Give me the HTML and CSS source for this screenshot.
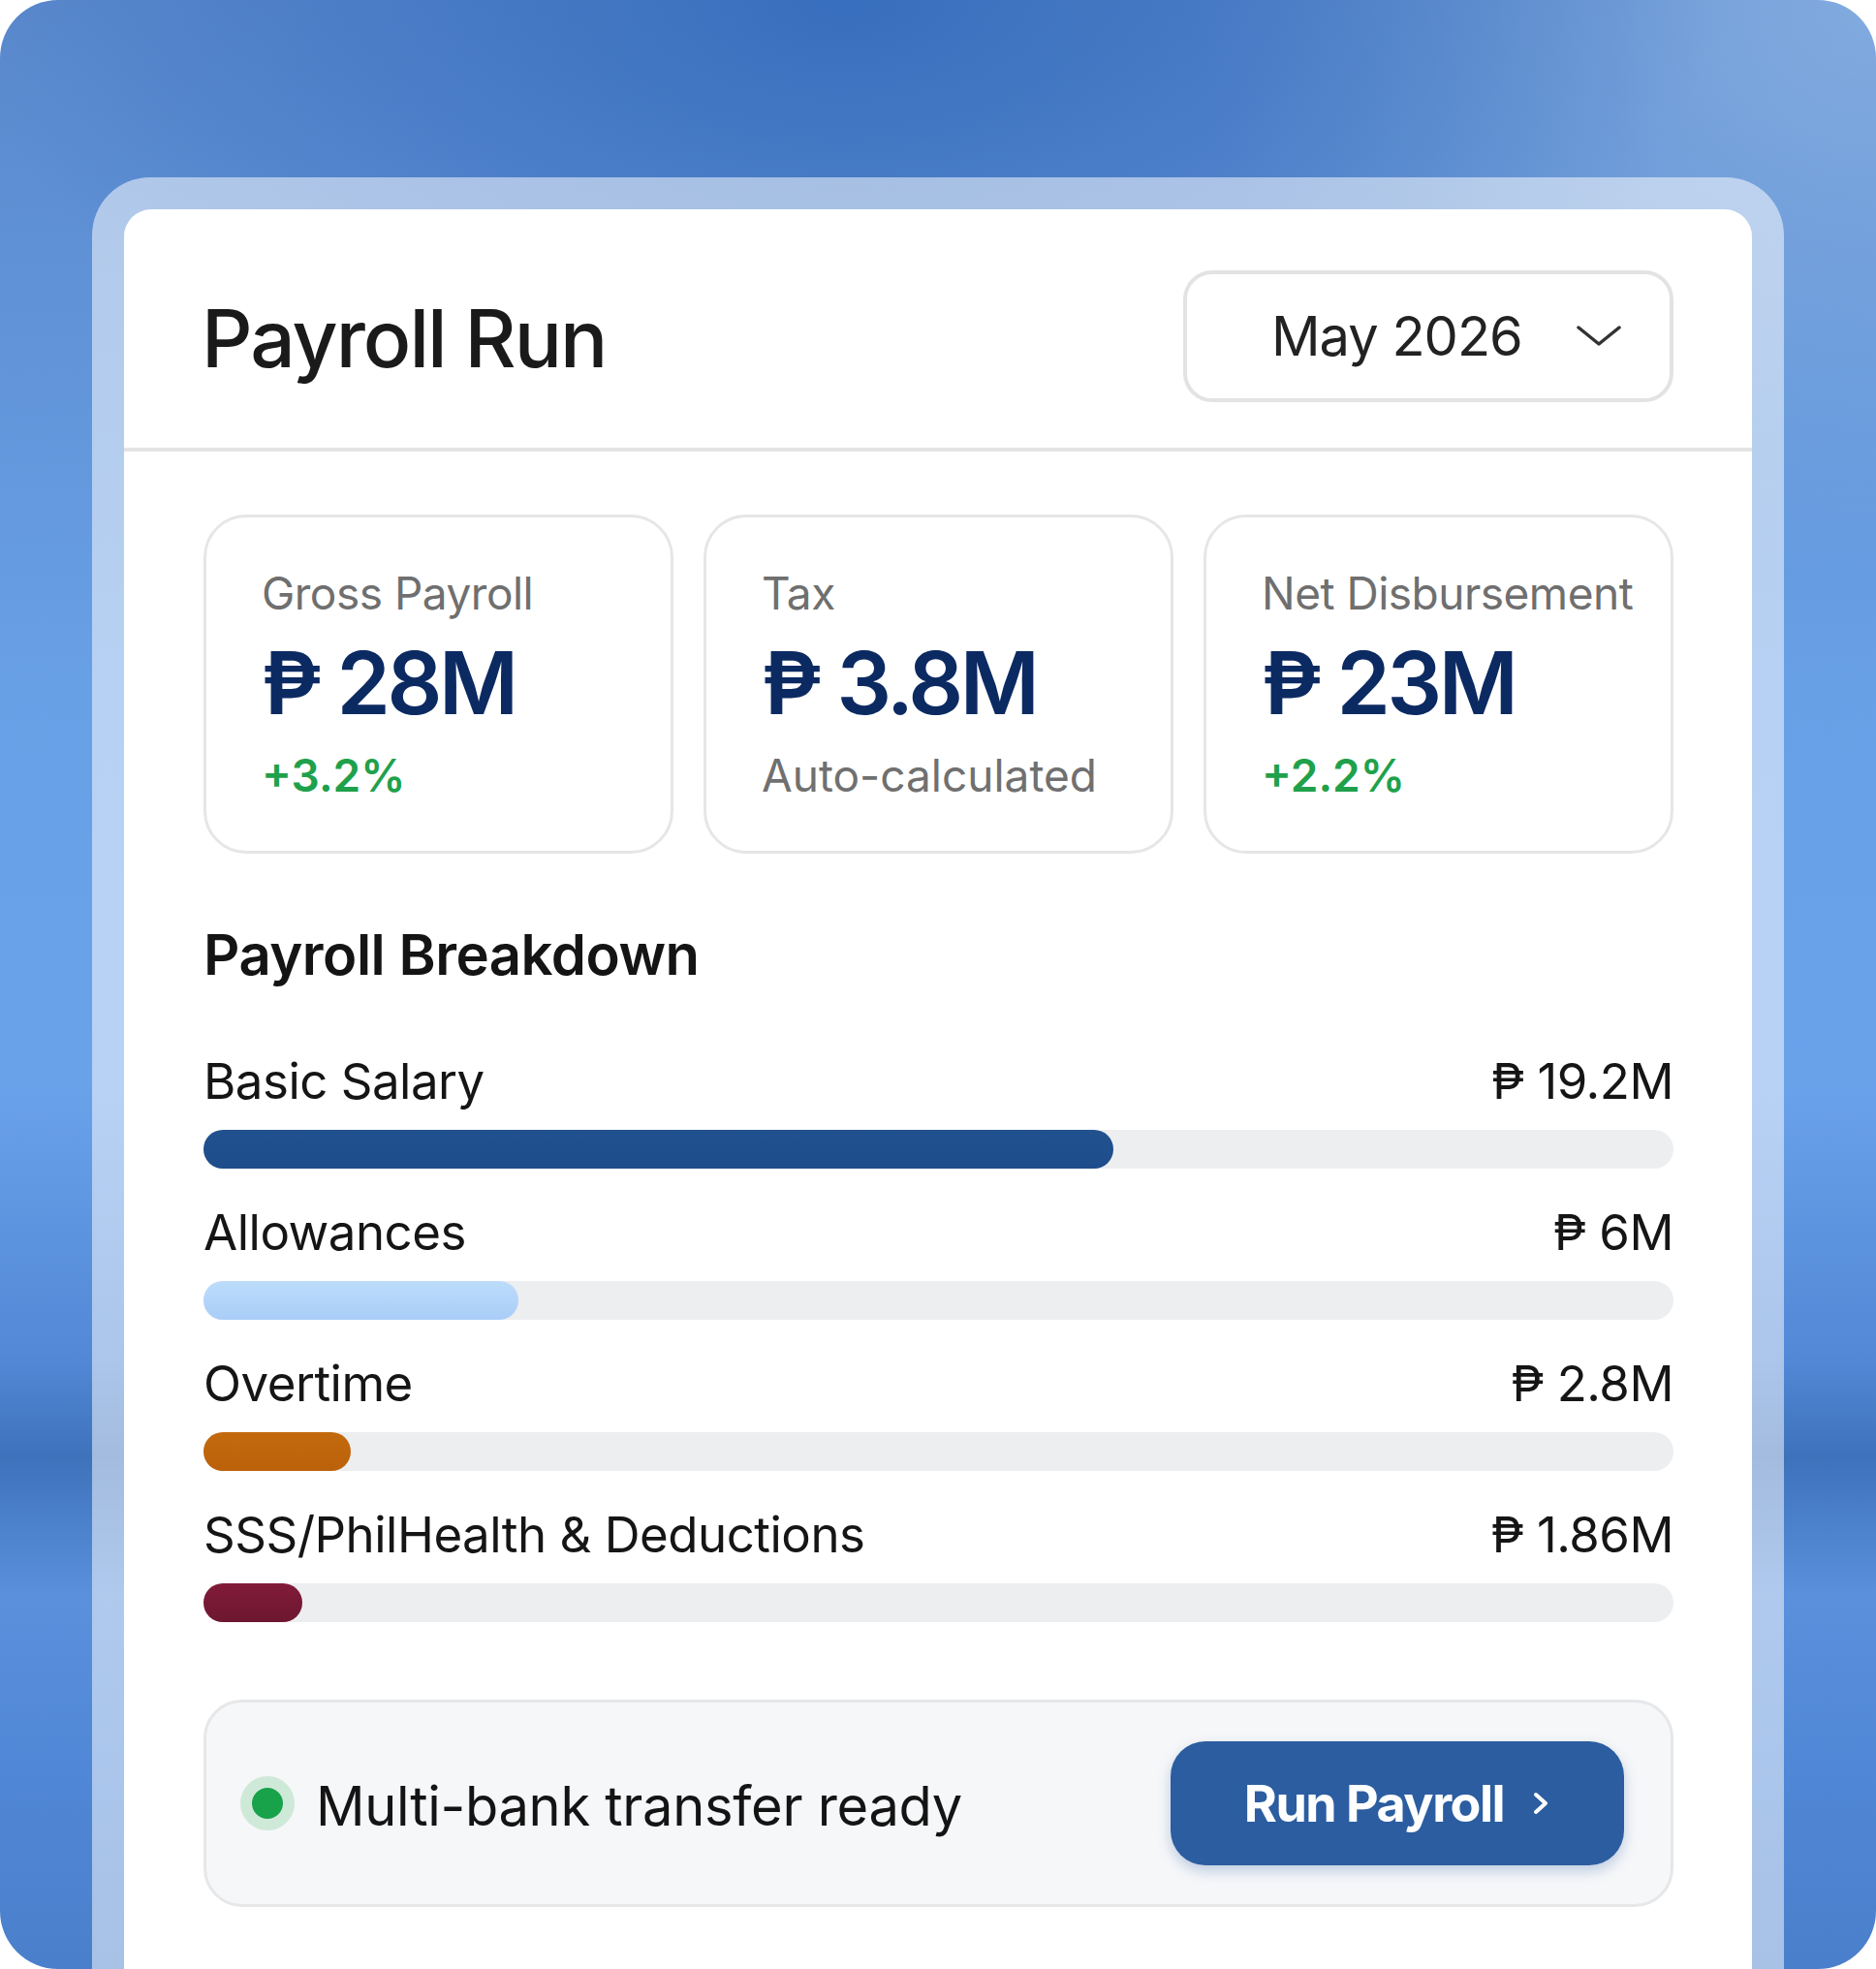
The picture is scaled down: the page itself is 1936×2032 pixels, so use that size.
FILE: index.html
```html
<!DOCTYPE html>
<html>
<head>
  <title>Payroll Run</title>
  <link rel="stylesheet" href="styles.css">
</head>
<body>
  <div class="stage">
    <div class="frame">
      <div class="card">
        <div class="header">
          <h1 class="title">Payroll Run</h1>
          <div class="period">
            <span>May 2026</span>
            <svg class="chevron-down" width="46" height="22" viewBox="0 0 46 22">
              <polyline points="2,2 23,19 44,2" fill="none" stroke="#333" stroke-width="3.5" stroke-linecap="round" stroke-linejoin="round"/>
            </svg>
          </div>
        </div>

        <div class="content">
          <div class="stats">
            <div class="stat">
              <div class="stat-label">Gross Payroll</div>
              <div class="stat-value">₱ 28M</div>
              <div class="stat-note up">+3.2%</div>
            </div>
            <div class="stat">
              <div class="stat-label">Tax</div>
              <div class="stat-value">₱ 3.8M</div>
              <div class="stat-note">Auto-calculated</div>
            </div>
            <div class="stat">
              <div class="stat-label">Net Disbursement</div>
              <div class="stat-value">₱ 23M</div>
              <div class="stat-note up">+2.2%</div>
            </div>
          </div>

          <h2 class="section-title">Payroll Breakdown</h2>

          <div class="rows">
            <div class="row">
              <div class="row-head"><span>Basic Salary</span><span>₱ 19.2M</span></div>
              <div class="track"><div class="fill basic" style="width: 61.9%"></div></div>
            </div>
            <div class="row">
              <div class="row-head"><span>Allowances</span><span>₱ 6M</span></div>
              <div class="track"><div class="fill allow" style="width: 21.4%"></div></div>
            </div>
            <div class="row">
              <div class="row-head"><span>Overtime</span><span>₱ 2.8M</span></div>
              <div class="track"><div class="fill overtime" style="width: 10%"></div></div>
            </div>
            <div class="row">
              <div class="row-head"><span>SSS/PhilHealth &amp; Deductions</span><span>₱ 1.86M</span></div>
              <div class="track"><div class="fill deduct" style="width: 6.7%"></div></div>
            </div>
          </div>

          <div class="footer">
            <div class="status">
              <span class="dot"></span>
              <span>Multi-bank transfer ready</span>
            </div>
            <button class="run-button">
              <span>Run Payroll</span>
              <svg width="20" height="24" viewBox="0 0 20 24">
                <polyline points="5,3 15,12 5,21" fill="none" stroke="#fff" stroke-width="4" stroke-linecap="round" stroke-linejoin="round"/>
              </svg>
            </button>
          </div>
        </div>
      </div>
    </div>
  </div>
</body>
</html>
```

FILE: styles.css
```css
body {
  margin: 0;
  background-color: white;
  font-family: "Inter", "Noto Sans", "DejaVu Sans", sans-serif;
}

.stage {
  width: 1936px;
  height: 2032px;
  box-sizing: border-box;
  padding: 183px 95px 0 95px;
  border-radius: 60px;
  overflow: hidden;
  display: flex;
  flex-direction: column;
  background:
    radial-gradient(ellipse 900px 500px at 45% 0%, rgba(52, 108, 188, 0.9), rgba(52, 108, 188, 0) 100%),
    radial-gradient(ellipse 700px 600px at 100% 0%, rgba(140, 180, 228, 0.8), rgba(140, 180, 228, 0) 100%),
    linear-gradient(180deg, #5a88cc 0%, #68a0e6 35%, #6aa2ea 55%, #5288d6 69%, #3e72bb 74%, #5a90dc 81%, #5087d6 90%, #4a7fcb 100%);
}

.frame {
  flex: 1;
  display: flex;
  flex-direction: column;
  padding: 33px 33px 0 33px;
  border-radius: 60px 60px 0 0;
  background-color: rgba(255, 255, 255, 0.52);
}

.card {
  flex: 1;
  background-color: white;
  border-radius: 28px 28px 0 0;
}

.header {
  height: 250px;
  box-sizing: border-box;
  display: flex;
  justify-content: space-between;
  align-items: center;
  padding: 0 81px 0 80px;
  border-bottom: 4px solid #e4e4e4;
}

.title {
  margin: 0;
  padding-top: 21px;
  font-size: 82px;
  font-weight: 450;
  color: #1a1a1a;
  letter-spacing: -2px;
}

.period {
  width: 506px;
  height: 136px;
  box-sizing: border-box;
  border: 4px solid #e3e3e3;
  border-radius: 30px;
  display: flex;
  align-items: center;
  padding-left: 87px;
  gap: 56px;
  font-size: 56px;
  color: #222;
  letter-spacing: -1px;
  margin-top: 15px;
}

.content {
  padding: 65px 81px 0 82px;
}

.stats {
  display: grid;
  grid-template-columns: 1fr 1fr 1fr;
  gap: 31px;
}

.stat {
  height: 350px;
  box-sizing: border-box;
  border: 3px solid #e6e6e6;
  border-radius: 44px;
  padding: 50px 0 0 57px;
}

.stat-label {
  font-size: 46px;
  line-height: 56px;
  color: #6f6f6f;
  letter-spacing: -0.5px;
}

.stat-value {
  margin-top: 17px;
  font-size: 89px;
  line-height: 96px;
  font-weight: 600;
  color: #0c2a62;
  letter-spacing: -3.5px;
}

.stat-note {
  margin-top: 19px;
  font-size: 46px;
  line-height: 56px;
  color: #707070;
}

.stat-note.up {
  color: #1fa14b;
  font-weight: 600;
}

.section-title {
  margin: 69px 0 0 0;
  font-size: 58px;
  line-height: 70px;
  font-weight: 600;
  color: #141414;
  letter-spacing: -0.5px;
}

.rows {
  margin-top: 65px;
  display: flex;
  flex-direction: column;
  gap: 35px;
}

.row-head {
  display: flex;
  justify-content: space-between;
  font-size: 51px;
  line-height: 62px;
  color: #151515;
  letter-spacing: -0.5px;
}

.track {
  margin-top: 19px;
  height: 40px;
  border-radius: 20px;
  background-color: #eceef0;
}

.fill {
  height: 100%;
  border-radius: 20px;
}

.basic {
  background: linear-gradient(180deg, #21518f, #1e4d8c);
}

.allow {
  background: linear-gradient(180deg, #bddcfb, #a9cdf7);
}

.overtime {
  background: linear-gradient(180deg, #c3690d, #bb610a);
}

.deduct {
  background: linear-gradient(180deg, #811b3a, #6d1730);
}

.footer {
  margin-top: 80px;
  height: 214px;
  box-sizing: border-box;
  border: 3px solid #e6e7e9;
  border-radius: 40px;
  background-color: #f6f7f9;
  display: flex;
  justify-content: space-between;
  align-items: center;
  padding: 0 48px 0 35px;
}

.status {
  display: flex;
  align-items: center;
  gap: 22px;
  font-size: 56px;
  color: #141414;
  letter-spacing: -0.3px;
  padding-top: 6px;
}

.dot {
  width: 32px;
  height: 32px;
  border-radius: 50%;
  background-color: #18a24a;
  border: 12px solid #cfe9d9;
  margin-top: -6px;
}

.run-button {
  width: 468px;
  height: 128px;
  border: none;
  border-radius: 36px;
  background-color: #2b5da0;
  color: white;
  font-family: inherit;
  font-size: 52px;
  font-weight: 700;
  letter-spacing: -1.5px;
  display: flex;
  align-items: center;
  justify-content: center;
  gap: 28px;
  box-shadow: 0 6px 14px rgba(43, 93, 160, 0.28);
  cursor: pointer;
}
```
